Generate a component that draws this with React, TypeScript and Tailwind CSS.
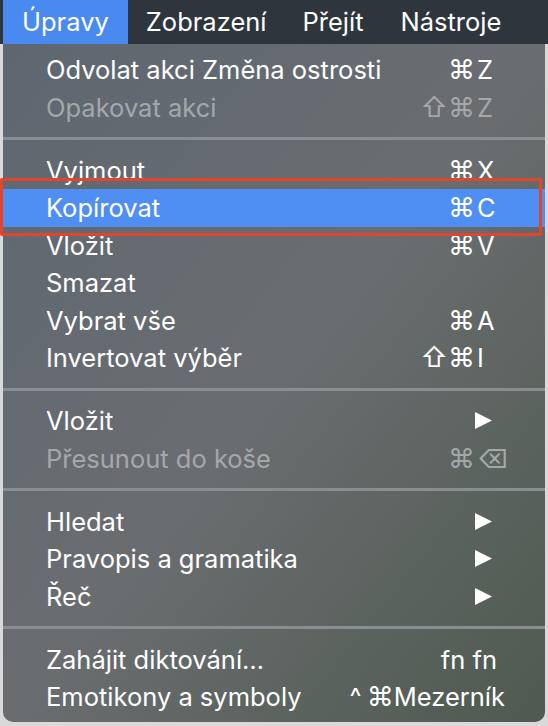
import React from "react";

type Item =
  | { kind: "sep" }
  | {
      kind: "item";
      label: string;
      mods?: string;
      keyName?: string;
      text?: string;
      submenu?: boolean;
      disabled?: boolean;
      active?: boolean;
    };

const items: Item[] = [
  { kind: "item", label: "Odvolat akci Změna ostrosti", mods: "⌘", keyName: "Z" },
  { kind: "item", label: "Opakovat akci", mods: "⇧⌘", keyName: "Z", disabled: true },
  { kind: "sep" },
  { kind: "item", label: "Vyjmout", mods: "⌘", keyName: "X" },
  { kind: "item", label: "Kopírovat", mods: "⌘", keyName: "C", active: true },
  { kind: "item", label: "Vložit", mods: "⌘", keyName: "V" },
  { kind: "item", label: "Smazat" },
  { kind: "item", label: "Vybrat vše", mods: "⌘", keyName: "A" },
  { kind: "item", label: "Invertovat výběr", mods: "⇧⌘", keyName: "I" },
  { kind: "sep" },
  { kind: "item", label: "Vložit", submenu: true },
  { kind: "item", label: "Přesunout do koše", mods: "⌘", keyName: "⌫", disabled: true },
  { kind: "sep" },
  { kind: "item", label: "Hledat", submenu: true },
  { kind: "item", label: "Pravopis a gramatika", submenu: true },
  { kind: "item", label: "Řeč", submenu: true },
  { kind: "sep" },
  { kind: "item", label: "Zahájit diktování…", text: "fn fn" },
  { kind: "item", label: "Emotikony a symboly", text: "^⌘Mezerník" },
];

function Arrow() {
  return (
    <svg width="17" height="17" viewBox="0 0 17 17" className="mr-[3px]">
      <polygon points="0,0 17,8.5 0,17" fill="white" />
    </svg>
  );
}

function Row({ item }: { item: Extract<Item, { kind: "item" }> }) {
  const color = item.disabled ? "text-[#a5a8ab]" : "text-white";
  return (
    <div
      className={`flex h-[37.5px] items-center justify-between pl-[43px] pr-[50px] ${color} ${
        item.active ? "bg-[#4f8ef2]" : ""
      }`}
    >
      <span>{item.label}</span>
      {item.submenu && <Arrow />}
      {item.mods && (
        <span className="flex items-center">
          <span className="text-right text-[27px]">{item.mods}</span>
          <span className="w-[20px] pl-[2px] text-left">{item.keyName}</span>
        </span>
      )}
      {item.text === "fn fn" && <span className="-mr-[2px]">fn fn</span>}
      {item.text === "^⌘Mezerník" && (
        <span className="-mr-[10px] flex items-center">
          <span className="mr-[5px]">^</span>
          <span className="text-[27px]">⌘</span>
          <span>Mezerník</span>
        </span>
      )}
    </div>
  );
}

export default function App() {
  return (
    <div
      className="relative h-[726px] w-[548px] overflow-hidden bg-[#d9d9d9] text-[25.5px] leading-none"
      style={{ fontFamily: "Inter, 'DejaVu Sans', sans-serif" }}
    >
      <div className="flex h-[44px] items-stretch bg-[#2f353d] text-[25.5px] text-white">
        <div className="ml-[3px] flex items-center bg-[#4a8af0] px-[19px]">Úpravy</div>
        <div className="flex items-center px-[18px]">Zobrazení</div>
        <div className="flex items-center px-[18px]">Přejít</div>
        <div className="flex items-center px-[19px]">Nástroje</div>
      </div>

      <div className="ml-[3px] w-[542px] rounded-b-[10px] bg-gradient-to-br from-[#5e6771] via-[#6a6d70] to-[#4e5a4f] pb-[6px] pt-[7px]">
        {items.map((it, i) =>
          it.kind === "sep" ? (
            <div key={i} className="flex h-[25.5px] items-center">
              <div className="h-[3px] w-full bg-[#8a8e92]" />
            </div>
          ) : (
            <Row key={i} item={it} />
          )
        )}
      </div>

      <div className="absolute left-0 top-[178px] h-[58px] w-[542px] rounded-[2px] border-[3px] border-[#e2452d]" />
    </div>
  );
}
